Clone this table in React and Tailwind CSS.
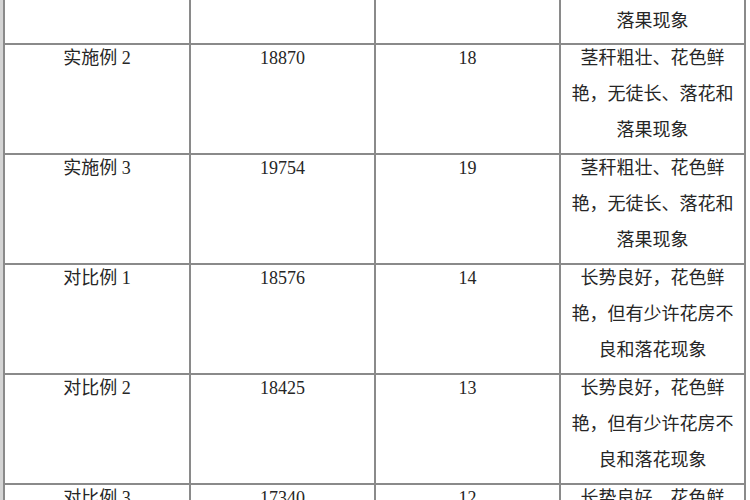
const rows = [
  {
    name: '实施例 2',
    count: '18870',
    score: '18',
    note: ['茎秆粗壮、花色鲜', '艳，无徒长、落花和', '落果现象'],
  },
  {
    name: '实施例 3',
    count: '19754',
    score: '19',
    note: ['茎秆粗壮、花色鲜', '艳，无徒长、落花和', '落果现象'],
  },
  {
    name: '对比例 1',
    count: '18576',
    score: '14',
    note: ['长势良好，花色鲜', '艳，但有少许花房不', '良和落花现象'],
  },
  {
    name: '对比例 2',
    count: '18425',
    score: '13',
    note: ['长势良好，花色鲜', '艳，但有少许花房不', '良和落花现象'],
  },
  {
    name: '对比例 3',
    count: '17340',
    score: '12',
    note: ['长势良好，花色鲜', '艳，但有少许花房不', '良和落花现象'],
  },
];

const cell = 'h-[110px] border-r-2 border-b-2 border-[#8a8a8a] text-center overflow-hidden';
const topCell = 'h-[45px] border-r-2 border-b-2 border-[#8a8a8a] text-center';

export default function App() {
  return (
    <div
      className="w-[750px] h-[500px] overflow-hidden bg-white flex text-[18px] leading-[36px] text-[#262626]"
      style={{ fontFamily: '"Liberation Serif", "Noto Sans CJK SC", serif' }}
    >
      {/* grey scan edge */}
      <div className="w-[3px] shrink-0 bg-[#d4d4d4]" />

      <div className="border-l-2 border-[#8a8a8a] grid grid-cols-[186px_185px_185px_185px] self-start">
        {/* tail of the row above, cut by the scan */}
        <div className={topCell} />
        <div className={topCell} />
        <div className={topCell} />
        <div className={topCell}>
          <div className="pt-[3px]">落果现象</div>
        </div>

        {rows.map((r) => (
          <div key={r.name} className="contents">
            <div className={cell}>
              <div className="-mt-[5px]">{r.name}</div>
            </div>
            <div className={cell}>
              <div className="-mt-[5px]">{r.count}</div>
            </div>
            <div className={cell}>
              <div className="-mt-[5px]">{r.score}</div>
            </div>
            <div className={cell}>
              <div className="-mt-[5px]">
                {r.note.map((line) => (
                  <div key={line} className="whitespace-nowrap">{line}</div>
                ))}
              </div>
            </div>
          </div>
        ))}
      </div>
    </div>
  );
}
